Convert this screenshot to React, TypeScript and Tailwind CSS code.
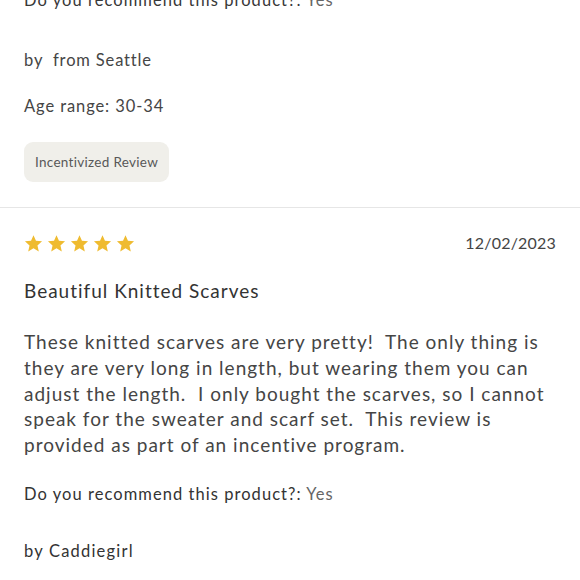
const font = { fontFamily: "Lato, 'Noto Sans', sans-serif" };

function Stars({ count }: { count: number }) {
  return (
    <div className="flex items-center gap-[4px]">
      {Array.from({ length: count }).map((_, i) => (
        <svg key={i} viewBox="0 0 24 24" className="h-[19px] w-[19px] fill-[#efbb30]">
          <path d="M12 1.5l3.1 7.1 7.7.7-5.8 5.1 1.7 7.6L12 18l-6.7 4 1.7-7.6-5.8-5.1 7.7-.7z" />
        </svg>
      ))}
    </div>
  );
}

export default function App() {
  return (
    <div className="h-[580px] w-[580px] overflow-hidden bg-white text-[#383838]" style={font}>
      <div className="-mt-[12px]">
        {/* previous review, scrolled off the top */}
        <section className="border-b border-[#e6e6e6] px-6 pb-[25px]">
          <p className="text-[16.5px] leading-[24px] tracking-[1.05px]">
            Do you recommend this product?: <span className="text-[#666]">Yes</span>
          </p>
          <p className="mt-[36px] text-[16.5px] leading-[24px] tracking-[0.85px] text-[#454545]">
            by&nbsp; from Seattle
          </p>
          <p className="mt-[22px] text-[16.5px] leading-[24px] tracking-[0.9px] text-[#454545]">
            Age range: 30-34
          </p>
          <span className="mt-[24px] inline-flex h-[40px] items-center rounded-[9px] bg-[#f0efea] px-[11px] text-[13.5px] tracking-[0.3px] text-[#585858]">
            Incentivized Review
          </span>
        </section>

        <section className="px-6 pt-[23px]">
          <div className="flex h-[24px] items-center justify-between">
            <Stars count={5} />
            <span className="text-[16px] tracking-[0.2px] text-[#454545]">12/02/2023</span>
          </div>
          <h3 className="mt-[22px] text-[19px] leading-[28px] tracking-[1px] text-[#333]">
            Beautiful Knitted Scarves
          </h3>
          <p className="mt-[24px] text-[19px] leading-[25.75px] tracking-[1px] text-[#454545]">
            These knitted scarves are very pretty!&nbsp; The only thing is they are very long in
            length, but wearing them you can adjust the length.&nbsp; I only bought the scarves,
            so I cannot speak for the sweater and scarf set.&nbsp; This review is provided as part
            of an incentive program.
          </p>
          <p className="mt-[24px] text-[16.5px] leading-[24px] tracking-[1.05px] text-[#333]">
            Do you recommend this product?: <span className="text-[#666]">Yes</span>
          </p>
          <p className="mt-[33px] text-[16.5px] leading-[24px] tracking-[1.2px] text-[#333]">
            by Caddiegirl
          </p>
        </section>
      </div>
    </div>
  );
}
